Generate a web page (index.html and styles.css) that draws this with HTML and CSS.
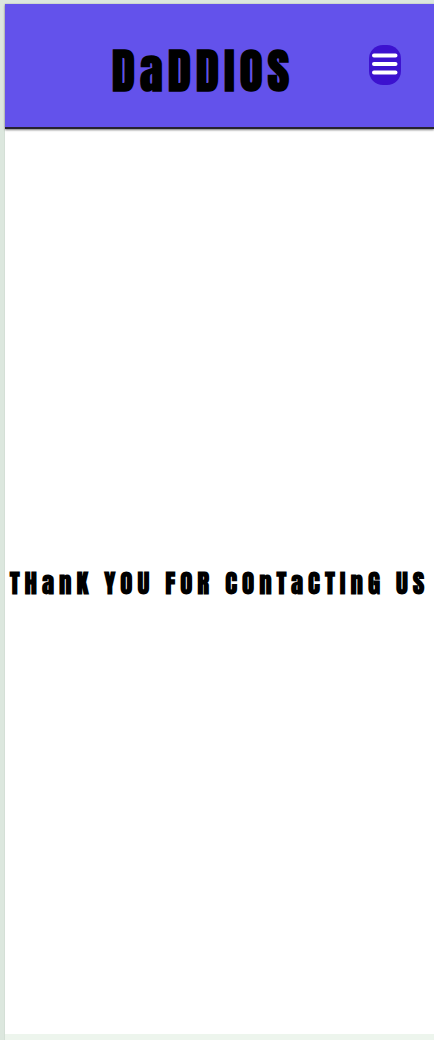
FILE: index.html
```html
<!DOCTYPE html>
<html lang="en">
<head>
<meta charset="utf-8">
<meta name="viewport" content="width=device-width, initial-scale=1">
<title>Daddios</title>
<link rel="stylesheet" href="styles.css">
</head>
<body>
<div class="page">
  <header class="header">
    <h1 class="brand">DaDDIOS</h1>
    <button class="menu" type="button" aria-label="Menu">
      <svg class="menu-icon" viewBox="0 0 26 22" aria-hidden="true">
        <path d="M2 2.5H23.5M2 11H23.5M2 19.5H23.5"/>
      </svg>
    </button>
  </header>
  <main class="main">
    <h2 class="message">THanK YOU FOR COnTaCTInG US</h2>
  </main>
</div>
</body>
</html>
```

FILE: styles.css
```css
* {
  box-sizing: border-box;
}

body {
  margin: 0;
  min-height: 100vh;
  display: flex;
  flex-direction: column;
  padding: 4px 0 0 5px;
  background: #dce7de;
  font-family: Anton, Roboto, "Liberation Sans", sans-serif;
  color: #000;
}

.page {
  flex: 1;
  display: flex;
  flex-direction: column;
  background: #fff;
  border-bottom: 6px solid #edf5ed;
  box-shadow: 0 0 1px #aeb8b0;
}

.header {
  display: grid;
  grid-template-columns: 1fr auto 1fr;
  align-items: center;
  height: 125px;
  padding: 0 33px 2px 0;
  background: #6352eb;
  border-bottom: 2px solid #25222f;
  box-shadow: 0 1px 2px #777;
}

.brand {
  grid-column: 2;
  margin: 12px 0 0;
  font-size: 47px;
  line-height: 56px;
  font-weight: 700;
  letter-spacing: 5px;
}

.menu {
  justify-self: end;
  display: flex;
  justify-content: center;
  width: 32px;
  height: 40px;
  padding: 8px 0 0;
  border: 0;
  border-radius: 14px;
  background: #3c12cf;
}

.menu-icon {
  width: 26px;
  height: 22px;
  fill: none;
  stroke: #fff;
  stroke-width: 4;
  stroke-linecap: round;
}

.main {
  flex: 1;
  display: flex;
  align-items: center;
  justify-content: center;
}

.message {
  margin: 4px 0 0;
  font-size: 25px;
  line-height: 32px;
  font-weight: 700;
  letter-spacing: 5px;
  text-align: center;
}
```
